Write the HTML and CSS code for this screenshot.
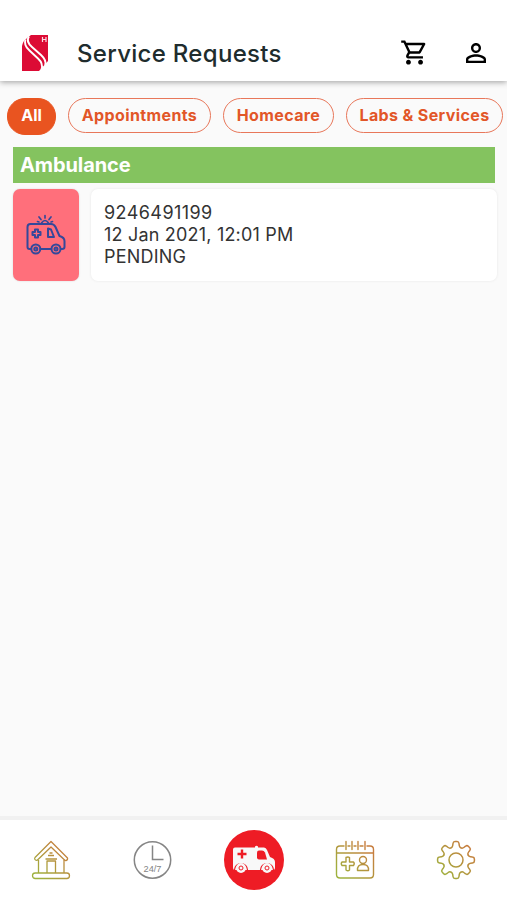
FILE: index.html
```html
<!DOCTYPE html>
<html lang="en">
<head>
<meta charset="utf-8">
<meta name="viewport" content="width=device-width, initial-scale=1">
<title>Service Requests</title>
<link rel="stylesheet" href="styles.css">
</head>
<body>
<div class="app">
  <header class="header">
    <svg class="logo" viewBox="0 0 28 38" width="28" height="38">
      <path d="M10 1H27V27L18 37H1V12Q2 7 5 5Z" fill="#dc0b35"/>
      <g fill="none" stroke="#fff" stroke-width="1.900">
        <path d="M8 2.500C5.500 6 7 9.500 11 13L20 21Q26 26.500 24 31"/>
        <path d="M4.500 5.500C3 9.500 4.500 13 8.500 16.500L17 24.500Q22.500 29.500 20.500 35.500"/>
      </g>
      <path d="M21.500 3v5M25 3v5M21.500 5.500H25" stroke="#fff" stroke-width="1.200" opacity=".85"/>
    </svg>
    <h1 class="title">Service Requests</h1>
    <div class="actions">
      <svg viewBox="0 0 24 24" width="29" height="29"><path d="M15.550 13c.75 0 1.410-.41 1.750-1.030l3.580-6.490A.996.996 0 0 0 20.010 4H5.210l-.94-2H1v2h2l3.600 7.590-1.350 2.440C4.520 15.370 5.480 17 7 17h12v-2H7l1.100-2h7.450zM6.160 6h12.150l-2.760 5H8.530L6.160 6zM7 18c-1.100 0-1.990.9-1.990 2S5.900 22 7 22s2-.9 2-2-.9-2-2-2zm10 0c-1.100 0-1.990.9-1.990 2s.89 2 1.990 2 2-.9 2-2-.9-2-2-2z"/></svg>
      <svg viewBox="0 0 24 24" width="30" height="30"><path d="M12 5.900a2.100 2.100 0 1 1 0 4.200 2.100 2.100 0 0 1 0-4.200m0 9c2.970 0 6.100 1.460 6.100 2.100v1.100H5.900V17c0-.64 3.130-2.100 6.100-2.100M12 4C9.790 4 8 5.790 8 8s1.790 4 4 4 4-1.790 4-4-1.790-4-4-4zm0 9c-2.670 0-8 1.340-8 4v3h16v-3c0-2.660-5.330-4-8-4z"/></svg>
    </div>
  </header>

  <main class="content">
    <div class="chips">
      <span class="chip chip-all active">All</span>
      <span class="chip chip-appointments">Appointments</span>
      <span class="chip chip-homecare">Homecare</span>
      <span class="chip chip-labs">Labs &amp; Services</span>
    </div>
    <h2 class="section">Ambulance</h2>
    <article class="request">
      <div class="tile">
        <svg viewBox="0 0 40 42" width="40" height="42" fill="none" stroke="#35489a" stroke-width="2" stroke-linecap="round" stroke-linejoin="round">
          <path d="M5 35H3.500Q1.500 35 1.500 33V13Q1.500 10 4.500 10H25Q28 10 29.500 13L33.500 22Q38.500 23.500 38.500 27V33Q38.500 35 36 35H35M14.500 35H25"/>
          <circle cx="9.800" cy="35" r="4.500"/><circle cx="9.800" cy="35" r="1.500"/>
          <circle cx="30" cy="35" r="4.500"/><circle cx="30" cy="35" r="1.500"/>
          <path d="M9 15.500h3v2.500h2.500v3H12v2.500H9V21H6.500v-3H9zM22 14.500V23H28L25 15.500Z"/>
          <path d="M15.500 9Q19 4 22.500 9M19 1.500V4M13 3L15 5.500M25 3L23 5.500M11.500 7.500L13 8M26.500 7.500L25 8" stroke-width="1.700"/>
        </svg>
      </div>
      <div class="details">
        <p class="phone">9246491199</p>
        <p>12 Jan 2021, 12:01 PM</p>
        <p>PENDING</p>
      </div>
    </article>
  </main>

  <nav class="nav">
    <a class="nav-item">
      <svg viewBox="0 0 40 40" width="40" height="40" fill="none" stroke="url(#gold)" stroke-width="1.300" stroke-linejoin="round">
        <defs><linearGradient id="gold" gradientUnits="userSpaceOnUse" x1="6" y1="36" x2="34" y2="8"><stop offset="0" stop-color="#9eb13d"/><stop offset="1" stop-color="#c77d3e"/></linearGradient></defs>
        <path d="M20 1.500L36.500 18Q37 20 35 20.500Q34 20.800 33 19.500L20 7L7 19.500Q6 20.800 4.500 20Q3 19 4 17.500Z"/>
        <path d="M7.500 20V33M33 20V33M16 33V21H24.500V33M14.500 19H26M17 15.500H23M18.500 13H21.500"/>
        <rect x="1.500" y="33" width="37" height="5.500" rx="2.700"/>
      </svg>
    </a>
    <a class="nav-item">
      <svg viewBox="0 0 40 40" width="40" height="40">
        <circle cx="20.500" cy="20" r="18.200" fill="none" stroke="#858585" stroke-width="1.500"/>
        <path d="M20.500 5.500V19.500H31.500" fill="none" stroke="#858585" stroke-width="1.500"/>
        <text class="clock-text" x="11.500" y="31.500" textLength="18" lengthAdjust="spacingAndGlyphs">24/7</text>
      </svg>
    </a>
    <a class="nav-item">
      <svg viewBox="0 0 60 60" width="60" height="60">
        <circle cx="30" cy="30" r="30" fill="#ee1c25"/>
        <path d="M11 17.500H31V16.500Q32.500 15 34 16.500V17.500H40Q42 17.500 43 20L46 27Q51 28.500 51 32V38Q51 40 49 40H11Q9 40 9 38V19.500Q9 17.500 11 17.500Z" fill="#f8f8f8"/>
        <path d="M18 19.500V28.500M13.500 24H22.500" stroke="#ee1c25" stroke-width="2.400"/>
        <path d="M35 20.500H38Q40 20.500 41 22.500L43 29.500H35Q33 29.500 33 27.500V22.500Q33 20.500 35 20.500Z" fill="#ee1c25"/>
        <path d="M10.500 40A6.500 6.500 0 0 1 23.500 40M36.500 40A6.500 6.500 0 0 1 49.500 40" fill="none" stroke="#ee1c25" stroke-width="1.200"/>
        <circle cx="17" cy="38" r="4.900" fill="#f8f8f8"/><circle cx="43" cy="38" r="4.900" fill="#f8f8f8"/>
        <g fill="none" stroke="#ee1c25" stroke-width="1"><circle cx="17" cy="38" r="2"/><circle cx="43" cy="38" r="2"/></g>
      </svg>
    </a>
    <a class="nav-item">
      <svg viewBox="0 0 40 40" width="40" height="40" fill="none" stroke="url(#gold)" stroke-width="1.400" stroke-linejoin="round" stroke-linecap="round">
        <path d="M9 6H5Q1.500 6 1.500 9.500V34.500Q1.500 38 5 38H35Q38.500 38 38.500 34.500V9.500Q38.500 6 35 6H32M2 13H38M11 1.500V9.500M17 1.500V9.500M23 1.500V9.500M30 1.500V9.500M13 6H15M19 6H21M25 6H28"/>
        <path d="M11 17.500Q13 16.500 14.500 17.500V22H18.500Q20 23.700 18.500 25.500H14.500V30Q13 31.500 11 30V25.500H7Q5.500 23.700 7 22H11Z"/>
        <circle cx="28" cy="20" r="3.500"/><path d="M22.500 30.500Q22 24.500 28 24.500Q34 24.500 33.500 30.500Z"/>
      </svg>
    </a>
    <a class="nav-item">
      <svg viewBox="0 0 40 40" width="40" height="40">
        <defs>
          <path id="tooth" d="M-5 -12.100Q-3.500 -12.700 -3.300 -14.400L-3 -16.500Q-2.800 -18.400 -1 -18.400H1Q2.800 -18.400 3 -16.500L3.300 -14.400Q3.500 -12.700 5 -12.100"/>
          <mask id="gear" maskUnits="userSpaceOnUse" x="0" y="0" width="40" height="40">
            <g transform="translate(20 20)" fill="none" stroke="#fff" stroke-width="1.500" stroke-linecap="round">
              <use href="#tooth"/><use href="#tooth" transform="rotate(45)"/><use href="#tooth" transform="rotate(90)"/><use href="#tooth" transform="rotate(135)"/><use href="#tooth" transform="rotate(180)"/><use href="#tooth" transform="rotate(225)"/><use href="#tooth" transform="rotate(270)"/><use href="#tooth" transform="rotate(315)"/>
              <circle r="7"/>
            </g>
          </mask>
        </defs>
        <rect width="40" height="40" fill="url(#gold)" mask="url(#gear)"/>
      </svg>
    </a>
  </nav>
</div>
</body>
</html>
```
FILE: styles.css
```css
* { box-sizing: border-box; }
body {
  margin: 0;
  background: #fafafa;
  font-family: Inter, "Liberation Sans", sans-serif;
}
h1, h2, p { margin: 0; }
svg { display: block; flex: none; }
.app {
  display: flex;
  flex-direction: column;
  height: 900px;
  overflow: hidden;
}
.header {
  display: flex;
  align-items: center;
  flex: none;
  height: 81px;
  padding: 25px 16px 0 21px;
  background: #fff;
  box-shadow: 0 1px 6px rgba(0, 0, 0, .38);
}
.title {
  margin-left: 28px;
  color: #202c2d;
  font-size: 24px;
  font-weight: 500;
  letter-spacing: .3px;
  white-space: nowrap;
}
.actions {
  display: flex;
  gap: 32px;
  margin-left: auto;
}
.content { flex: 1; padding-top: 17px; }
.chips {
  display: flex;
  align-items: flex-start;
  gap: 12px;
  padding-left: 7px;
}
.chip {
  flex: none;
  height: 35px;
  border: 1.5px solid #e8775a;
  border-radius: 18px;
  color: #e25628;
  font-size: 16px;
  font-weight: 700;
  line-height: 33px;
  letter-spacing: .38px;
  text-align: center;
  white-space: nowrap;
}
.chip-all { width: 49px; }
.chip-appointments { width: 143px; }
.chip-homecare { width: 111px; }
.chip-labs { width: 157px; }
.active {
  height: 37px;
  border-color: #e95420;
  background: #e95420;
  color: #fff;
  letter-spacing: 0;
}
.section {
  height: 36px;
  margin: 12px 12px 6px 13px;
  padding-left: 7px;
  background: #84c35f;
  color: #fff;
  font-size: 20px;
  font-weight: 700;
  line-height: 36px;
  letter-spacing: -.1px;
}
.request {
  display: flex;
  gap: 12px;
  height: 92px;
  margin: 0 10px 0 13px;
}
.tile {
  display: grid;
  place-items: center;
  width: 66px;
  border-radius: 7px;
  background: #ff6f7b;
  box-shadow: 0 0 2px rgba(0, 0, 0, .15);
}
.details {
  flex: 1;
  padding: 13px;
  border-radius: 7px;
  background: #fff;
  box-shadow: 0 0 3px rgba(0, 0, 0, .08);
  color: #333;
  font-size: 18px;
  line-height: 22px;
  letter-spacing: .2px;
}
.phone { letter-spacing: .42px; }
.nav {
  display: flex;
  align-items: center;
  flex: none;
  height: 84px;
  border-top: 4px solid #f1f1f1;
  background: #fff;
}
.nav-item {
  display: flex;
  flex: 1;
  justify-content: center;
}
.clock-text {
  fill: #858585;
  font-family: "Liberation Sans", sans-serif;
  font-size: 9.5px;
}
```
